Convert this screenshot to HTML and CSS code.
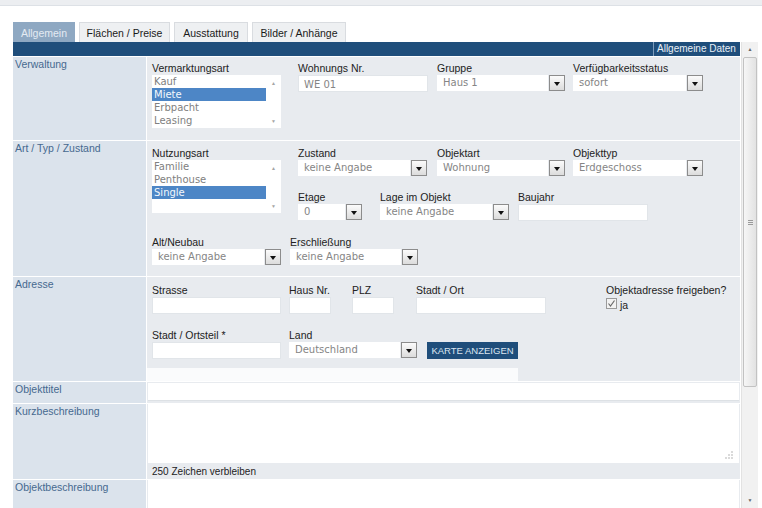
FILE: index.html
```html
<!DOCTYPE html>
<html>

<head>
  <title>Objekt bearbeiten - Allgemein</title>
  <link rel="stylesheet" href="styles.css">
</head>

<body>
  <div class="topline"></div>

  <div class="tabs">
    <span class="tab tab-allgemein active">Allgemein</span>
    <span class="tab tab-flaechen">Flächen / Preise</span>
    <span class="tab tab-ausstattung">Ausstattung</span>
    <span class="tab tab-bilder">Bilder / Anhänge</span>
  </div>

  <div class="frame">
    <div class="panel">
      <div class="bar"><span class="bar-title">Allgemeine Daten</span></div>

      <!-- Verwaltung -->
      <div class="section sec-verwaltung">
        <div class="side">Verwaltung</div>
        <div class="body body-verwaltung">
          <div class="row">
            <div class="field w146">
              <div class="lbl">Vermarktungsart</div>
              <div class="listbox">
                <div class="opts">
                  <div class="opt">Kauf</div>
                  <div class="opt sel">Miete</div>
                  <div class="opt">Erbpacht</div>
                  <div class="opt">Leasing</div>
                </div>
                <div class="lb-scroll"><span>&#9650;</span><span>&#9660;</span></div>
              </div>
            </div>
            <div class="field w139">
              <div class="lbl">Wohnungs Nr.</div>
              <div class="input i130"><span class="val">WE 01</span></div>
            </div>
            <div class="field w136">
              <div class="lbl">Gruppe</div>
              <div class="select s128"><span class="val">Haus 1</span><span class="btn"></span></div>
            </div>
            <div class="field">
              <div class="lbl">Verfügbarkeitsstatus</div>
              <div class="select s130"><span class="val">sofort</span><span class="btn"></span></div>
            </div>
          </div>
        </div>
      </div>

      <!-- Art / Typ / Zustand -->
      <div class="section sec-art">
        <div class="side">Art / Typ / Zustand</div>
        <div class="body body-art">
          <div class="row">
            <div class="field w146">
              <div class="lbl">Nutzungsart</div>
              <div class="listbox">
                <div class="opts">
                  <div class="opt">Familie</div>
                  <div class="opt">Penthouse</div>
                  <div class="opt sel">Single</div>
                </div>
                <div class="lb-scroll"><span>&#9650;</span><span>&#9660;</span></div>
              </div>
            </div>
            <div class="stack">
              <div class="row">
                <div class="field w139">
                  <div class="lbl">Zustand</div>
                  <div class="select s129"><span class="val">keine Angabe</span><span class="btn"></span></div>
                </div>
                <div class="field w136">
                  <div class="lbl">Objektart</div>
                  <div class="select s128"><span class="val">Wohnung</span><span class="btn"></span></div>
                </div>
                <div class="field">
                  <div class="lbl">Objekttyp</div>
                  <div class="select s130"><span class="val">Erdgeschoss</span><span class="btn"></span></div>
                </div>
              </div>
              <div class="row row-next">
                <div class="field w82">
                  <div class="lbl">Etage</div>
                  <div class="select s64"><span class="val">0</span><span class="btn"></span></div>
                </div>
                <div class="field w138">
                  <div class="lbl">Lage im Objekt</div>
                  <div class="select s129"><span class="val">keine Angabe</span><span class="btn"></span></div>
                </div>
                <div class="field">
                  <div class="lbl">Baujahr</div>
                  <div class="input i130"></div>
                </div>
              </div>
            </div>
          </div>
          <div class="row row-next">
            <div class="field w138">
              <div class="lbl">Alt/Neubau</div>
              <div class="select s129"><span class="val">keine Angabe</span><span class="btn"></span></div>
            </div>
            <div class="field">
              <div class="lbl">Erschließung</div>
              <div class="select s128"><span class="val">keine Angabe</span><span class="btn"></span></div>
            </div>
          </div>
        </div>
      </div>

      <!-- Adresse -->
      <div class="section sec-adresse">
        <div class="side">Adresse</div>
        <div class="body body-adresse">
          <div class="row">
            <div class="field w137">
              <div class="lbl">Strasse</div>
              <div class="input i129"></div>
            </div>
            <div class="field w63">
              <div class="lbl">Haus Nr.</div>
              <div class="input i42"></div>
            </div>
            <div class="field w64">
              <div class="lbl">PLZ</div>
              <div class="input i42"></div>
            </div>
            <div class="field w190">
              <div class="lbl">Stadt / Ort</div>
              <div class="input i130"></div>
            </div>
            <div class="field">
              <div class="lbl">Objektadresse freigeben?</div>
              <label class="check">
                <svg width="11" height="11" viewBox="0 0 11 11">
                  <rect x="0.5" y="0.5" width="10" height="10" fill="#f2f2f2" stroke="#9a9a9a" />
                  <path d="M2.5 5.5 L4.5 8 L8.5 2.5" fill="none" stroke="#6b6b6b" stroke-width="1.2" />
                </svg>
                <span>ja</span>
              </label>
            </div>
          </div>
          <div class="row row-addr">
            <div class="field w137">
              <div class="lbl">Stadt / Ortsteil *</div>
              <div class="input i129"></div>
            </div>
            <div class="field w138">
              <div class="lbl">Land</div>
              <div class="select s128"><span class="val">Deutschland</span><span class="btn"></span></div>
            </div>
            <div class="field">
              <div class="lbl"></div>
              <button class="map-btn" type="button">KARTE ANZEIGEN</button>
            </div>
          </div>
          <div class="strip"></div>
        </div>
      </div>

      <!-- Objekttitel -->
      <div class="section sec-titel">
        <div class="side">Objekttitel</div>
        <div class="body body-line">
          <div class="wide-input"></div>
        </div>
      </div>

      <!-- Kurzbeschreibung -->
      <div class="section sec-kurz">
        <div class="side">Kurzbeschreibung</div>
        <div class="body body-text">
          <div class="textarea">
            <svg class="grip" width="8" height="8" viewBox="0 0 8 8">
              <circle cx="7" cy="1" r="0.7" fill="#999" />
              <circle cx="4" cy="4" r="0.7" fill="#999" />
              <circle cx="7" cy="4" r="0.7" fill="#999" />
              <circle cx="1" cy="7" r="0.7" fill="#999" />
              <circle cx="4" cy="7" r="0.7" fill="#999" />
              <circle cx="7" cy="7" r="0.7" fill="#999" />
            </svg>
          </div>
          <div class="counter">250 Zeichen verbleiben</div>
        </div>
      </div>

      <!-- Objektbeschreibung -->
      <div class="section sec-beschreibung">
        <div class="side">Objektbeschreibung</div>
        <div class="body body-text">
          <div class="textarea"></div>
        </div>
      </div>
    </div>

    <div class="scrollbar">
      <div class="sb-arrow">&#9650;</div>
      <div class="sb-thumb"><span></span><span></span><span></span></div>
      <div class="sb-space"></div>
      <div class="sb-arrow">&#9660;</div>
    </div>
  </div>
</body>

</html>
```

FILE: styles.css
```css
* {
  box-sizing: border-box;
}

body {
  margin: 0;
  height: 508px;
  overflow: hidden;
  background-color: #fff;
  font-family: "Liberation Sans", Arial, sans-serif;
  font-size: 10.5px;
  color: #222;
}

.topline {
  height: 6px;
  background-color: #eceef1;
  border-bottom: 1px solid #dde1e6;
}

/* Tabs */
.tabs {
  display: flex;
  gap: 4px;
  height: 20px;
  margin: 16px 0 0 13px;
}

.tab {
  display: flex;
  align-items: center;
  justify-content: center;
  height: 20px;
  background-color: #eef0f2;
  border: 1px solid #d9dce0;
  border-bottom: none;
  color: #1a1a1a;
}

.tab.active {
  background-color: #8ea8c2;
  border-color: #8ea8c2;
  color: #e4ebf3;
}

.tab-allgemein { width: 62px; }
.tab-flaechen { width: 91px; }
.tab-ausstattung { width: 74px; }
.tab-bilder { width: 94px; }

/* Frame */
.frame {
  display: flex;
  height: 466px;
  margin-left: 13px;
}

.panel {
  display: flex;
  flex-direction: column;
  gap: 1px;
  width: 727px;
  background-color: #fff;
  overflow: hidden;
}

.bar {
  display: flex;
  justify-content: flex-end;
  flex: none;
  height: 14px;
  background-color: #1f4e7b;
}

.bar-title {
  width: 87px;
  padding-left: 3px;
  line-height: 13px;
  font-size: 10px;
  white-space: nowrap;
  border-left: 1px solid #7d9bbb;
  color: #e9f0f7;
}

/* Sections */
.section {
  display: flex;
  gap: 1px;
  flex: none;
}

.sec-verwaltung { height: 83px; }
.sec-art { height: 135px; }
.sec-adresse { height: 104px; }
.sec-titel { height: 21px; }
.sec-kurz { height: 75px; }
.sec-beschreibung { flex: 1; }

.side {
  width: 133px;
  padding: 1px 2px;
  line-height: 13px;
  background-color: #dbe3ec;
  color: #46698f;
}

.body {
  flex: 1;
  background-color: #e8ebef;
}

.body-verwaltung { padding: 5px 0 0 5px; }
.body-art { padding: 6px 0 0 5px; }
.body-adresse { padding: 7px 0 0 5px; }
.body-line { padding: 1px 1px 2px 1px; }

.body-text {
  display: flex;
  flex-direction: column;
  padding: 0 1px;
}

.row {
  display: flex;
}

.row-next { margin-top: 15px; }
.row-addr { margin-top: 15px; }

.stack {
  display: flex;
  flex-direction: column;
}

.field {
  display: flex;
  flex-direction: column;
}

.w63 { width: 63px; }
.w64 { width: 64px; }
.w82 { width: 82px; }
.w136 { width: 136px; }
.w137 { width: 137px; }
.w138 { width: 138px; }
.w139 { width: 139px; }
.w146 { width: 146px; }
.w190 { width: 190px; }

.lbl {
  height: 13px;
  line-height: 13px;
  white-space: nowrap;
}

/* Controls */
.val {
  font-family: "DejaVu Sans", sans-serif;
  font-size: 10px;
  color: #858585;
  white-space: nowrap;
}

.input {
  height: 17px;
  padding-left: 5px;
  line-height: 16px;
  background-color: #fff;
  border: 1px solid #e1e5e9;
}

.i42 { width: 42px; }
.i129 { width: 129px; }
.i130 { width: 130px; }

.select {
  display: flex;
  height: 16px;
}

.select .val {
  flex: 1;
  padding-left: 6px;
  line-height: 16px;
  background-color: #fff;
}

.select .btn {
  display: flex;
  align-items: center;
  justify-content: center;
  width: 16px;
  height: 16px;
  margin-left: 1px;
  background: linear-gradient(#fbfbfb, #dcdcdc);
  border: 1px solid #8c8c8c;
}

.select .btn::after {
  content: "";
  margin-top: 2px;
  border-left: 3.5px solid transparent;
  border-right: 3.5px solid transparent;
  border-top: 4px solid #111;
}

.s64 { width: 64px; }
.s128 { width: 128px; }
.s129 { width: 129px; }
.s130 { width: 130px; }

.listbox {
  display: flex;
  width: 129px;
  height: 53px;
  background-color: #fff;
}

.opts {
  flex: 1;
  font-family: "DejaVu Sans", sans-serif;
  font-size: 10px;
  color: #808080;
}

.opt {
  height: 13px;
  padding-left: 2px;
  line-height: 13px;
}

.opt.sel {
  background-color: #4d86c6;
  color: #f4f8fc;
}

.lb-scroll {
  display: flex;
  flex-direction: column;
  justify-content: space-between;
  width: 15px;
  padding: 5px 0 4px;
  font-size: 5px;
  color: #a5a5a5;
  text-align: center;
}

.check {
  display: flex;
  align-items: flex-end;
  gap: 3px;
  margin-top: 1px;
  line-height: 11px;
}

.check span {
  margin-bottom: -2px;
}

.map-btn {
  width: 91px;
  height: 17px;
  padding: 0;
  border: none;
  background-color: #1f4e7b;
  color: #dce6f1;
  font-family: "Liberation Sans", Arial, sans-serif;
  font-size: 9.5px;
  cursor: pointer;
}

.strip {
  width: 371px;
  height: 13px;
  margin: 9px 0 0 -5px;
  background-color: #fafbfc;
}

.wide-input {
  height: 18px;
  background-color: #fff;
  border-bottom: 1px solid #dde1e5;
}

.textarea {
  position: relative;
  flex: 1;
  background-color: #fff;
}

.grip {
  position: absolute;
  right: 6px;
  bottom: 4px;
}

.counter {
  height: 16px;
  padding-left: 4px;
  line-height: 18px;
  font-size: 10px;
  color: #222;
}

/* Scrollbar */
.scrollbar {
  display: flex;
  flex-direction: column;
  width: 17px;
  margin-left: 1px;
  background-color: #f1f1f1;
  border-left: 1px solid #e2e2e2;
}

.sb-arrow {
  height: 15px;
  font-size: 5px;
  line-height: 15px;
  color: #666;
  text-align: center;
}

.sb-thumb {
  display: flex;
  flex-direction: column;
  align-items: center;
  justify-content: center;
  gap: 1px;
  height: 330px;
  margin: 0 1px;
  background: linear-gradient(90deg, #f6f6f6, #e2e2e2);
  border: 1px solid #c2c2c2;
  border-radius: 2px;
}

.sb-thumb span {
  width: 5px;
  height: 1px;
  background-color: #9a9a9a;
}

.sb-space {
  flex: 1;
}
```
